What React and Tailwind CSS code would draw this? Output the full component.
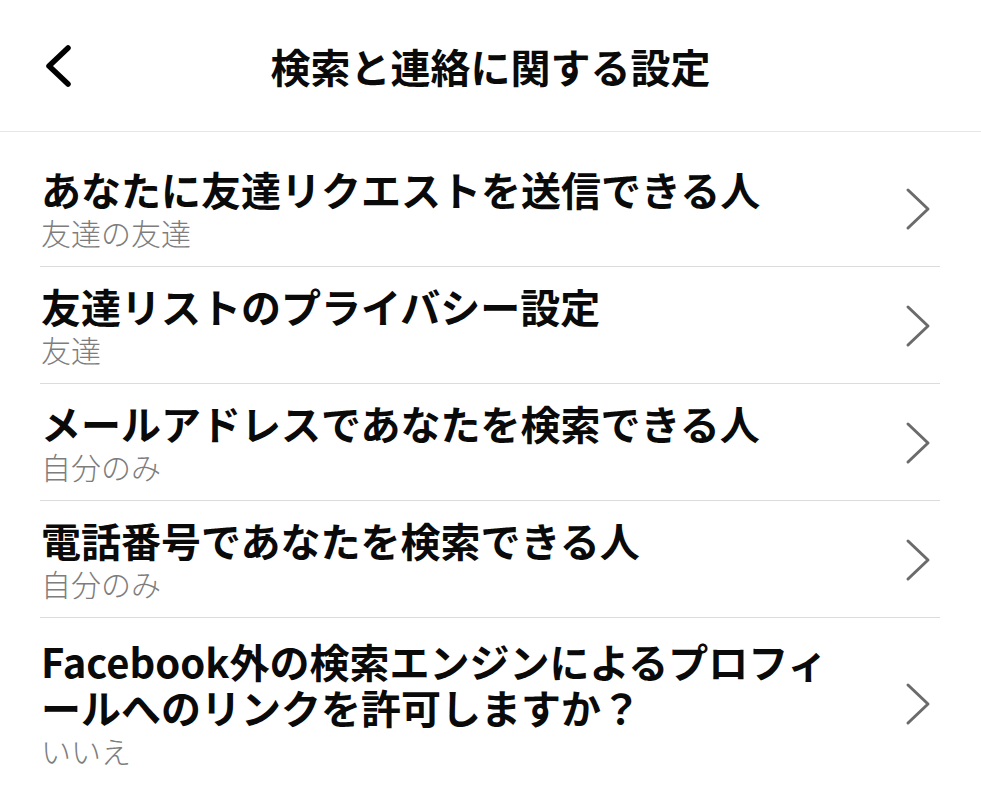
import React from "react";

const items = [
  { title: "あなたに友達リクエストを送信できる人", value: "友達の友達" },
  { title: "友達リストのプライバシー設定", value: "友達" },
  { title: "メールアドレスであなたを検索できる人", value: "自分のみ" },
  { title: "電話番号であなたを検索できる人", value: "自分のみ" },
  {
    title: ["Facebook外の検索エンジンによるプロフィ", "ールへのリンクを許可しますか？"],
    value: "いいえ",
  },
];

function BackIcon() {
  return (
    <svg width="32" height="44" viewBox="0 0 32 44" fill="none">
      <polyline
        points="24,4 5,22 24,40"
        stroke="#000"
        strokeWidth="5.5"
        strokeLinecap="round"
        strokeLinejoin="round"
      />
    </svg>
  );
}

function ChevronRight() {
  return (
    <svg width="26" height="44" viewBox="0 0 26 44" fill="none">
      <polyline
        points="3,3 23,22 3,41"
        stroke="#6b6b6b"
        strokeWidth="3"
        strokeLinecap="round"
        strokeLinejoin="round"
      />
    </svg>
  );
}

function SettingRow({ title, value, last }) {
  const lines = Array.isArray(title) ? title : [title];
  return (
    <button
      className={`w-full flex items-center text-left pb-[14px] ${
        lines.length > 1 ? "pt-5" : "pt-4"
      } ${last ? "" : "border-b border-[#dcdcdc]"}`}
    >
      <div className="flex-1 min-w-0 pl-[1px]">
        <div className="text-[40px] leading-[46px] font-bold text-[#0a0a0a] whitespace-nowrap">
          {lines.map((line, i) => (
            <div key={i}>{line}</div>
          ))}
        </div>
        <div className="text-[30px] leading-[40px] font-light text-[#7d7d7d]">{value}</div>
      </div>
      <div className="shrink-0 pr-[9px] pl-4 flex items-center">
        <ChevronRight />
      </div>
    </button>
  );
}

export default function App() {
  return (
    <div
      className="w-[981px] min-h-[800px] bg-white"
      style={{ fontFamily: '"Noto Sans CJK JP", "Noto Sans", sans-serif' }}
    >
      {/* HEADER */}
      <div className="h-[132px] grid grid-cols-[1fr_auto_1fr] items-center border-b border-[#e6e6e6]">
        <div className="pl-11 flex items-center">
          <BackIcon />
        </div>
        <h1 className="text-[40px] font-bold text-[#0a0a0a] leading-none">
          検索と連絡に関する設定
        </h1>
        <div />
      </div>

      {/* LIST */}
      <div className="ml-10 mr-[41px] pt-[18px]">
        {items.map((item, i) => (
          <SettingRow
            key={i}
            title={item.title}
            value={item.value}
            last={i === items.length - 1}
          />
        ))}
      </div>
    </div>
  );
}
